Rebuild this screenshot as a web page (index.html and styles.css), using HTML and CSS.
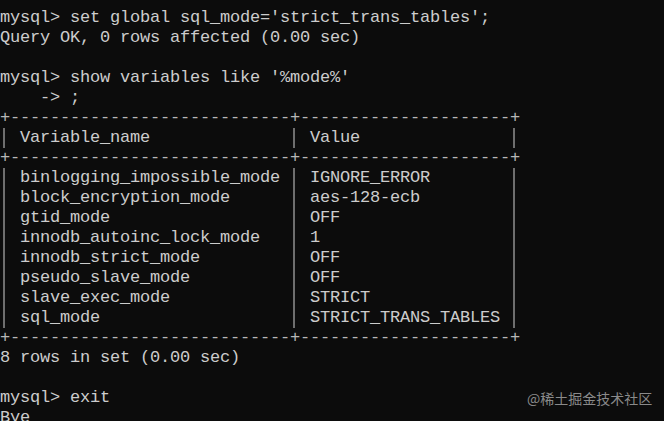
FILE: index.html
```html
<!DOCTYPE html>
<html>
<head>
<meta charset="utf-8">
<link rel="stylesheet" href="styles.css">
</head>
<body>
<div class="term">
<pre class="out">mysql&gt; set global sql_mode='strict_trans_tables';
Query OK, 0 rows affected (0.00 sec)

mysql&gt; show variables like '%mode%'
    -&gt; ;
<span class="bd">+----------------------------+---------------------+</span>
<span class="vb">|</span> Variable_name              <span class="vb">|</span> Value               <span class="vb">|</span>
<span class="bd">+----------------------------+---------------------+</span>
<span class="vb">|</span> binlogging_impossible_mode <span class="vb">|</span> IGNORE_ERROR        <span class="vb">|</span>
<span class="vb">|</span> block_encryption_mode      <span class="vb">|</span> aes-128-ecb         <span class="vb">|</span>
<span class="vb">|</span> gtid_mode                  <span class="vb">|</span> OFF                 <span class="vb">|</span>
<span class="vb">|</span> innodb_autoinc_lock_mode   <span class="vb">|</span> 1                   <span class="vb">|</span>
<span class="vb">|</span> innodb_strict_mode         <span class="vb">|</span> OFF                 <span class="vb">|</span>
<span class="vb">|</span> pseudo_slave_mode          <span class="vb">|</span> OFF                 <span class="vb">|</span>
<span class="vb">|</span> slave_exec_mode            <span class="vb">|</span> STRICT              <span class="vb">|</span>
<span class="vb">|</span> sql_mode                   <span class="vb">|</span> STRICT_TRANS_TABLES <span class="vb">|</span>
<span class="bd">+----------------------------+---------------------+</span>
8 rows in set (0.00 sec)

mysql&gt; exit
Bye</pre>
<div class="mark">@稀土掘金技术社区</div>
</div>
</body>
</html>
```
FILE: styles.css
```css
html, body {
  margin: 0;
  padding: 0;
  background: #0c0c0c;
  overflow: hidden;
}
.term {
  position: relative;
  width: 664px;
  height: 421px;
  overflow: hidden;
  background: #0c0c0c;
}
.out {
  margin: 0;
  padding: 8px 0 0 0;
  font-family: "Liberation Mono", monospace;
  font-size: 17px;
  letter-spacing: -0.2px;
  line-height: 20px;
  color: #cccccc;
}
.bd {
  color: #b8b8b8;
}
.vb {
  display: inline-block;
  width: 10px;
  height: 20px;
  vertical-align: top;
  color: transparent;
  letter-spacing: 0;
  background: linear-gradient(to right, transparent 3px, #6e6e6e 3px, #6e6e6e 5px, transparent 5px);
}
.mark {
  position: absolute;
  left: 527px;
  top: 389px;
  font-family: "Noto Sans CJK SC", sans-serif;
  font-size: 14px;
  line-height: 18px;
  color: #8a8a8a;
}
```
